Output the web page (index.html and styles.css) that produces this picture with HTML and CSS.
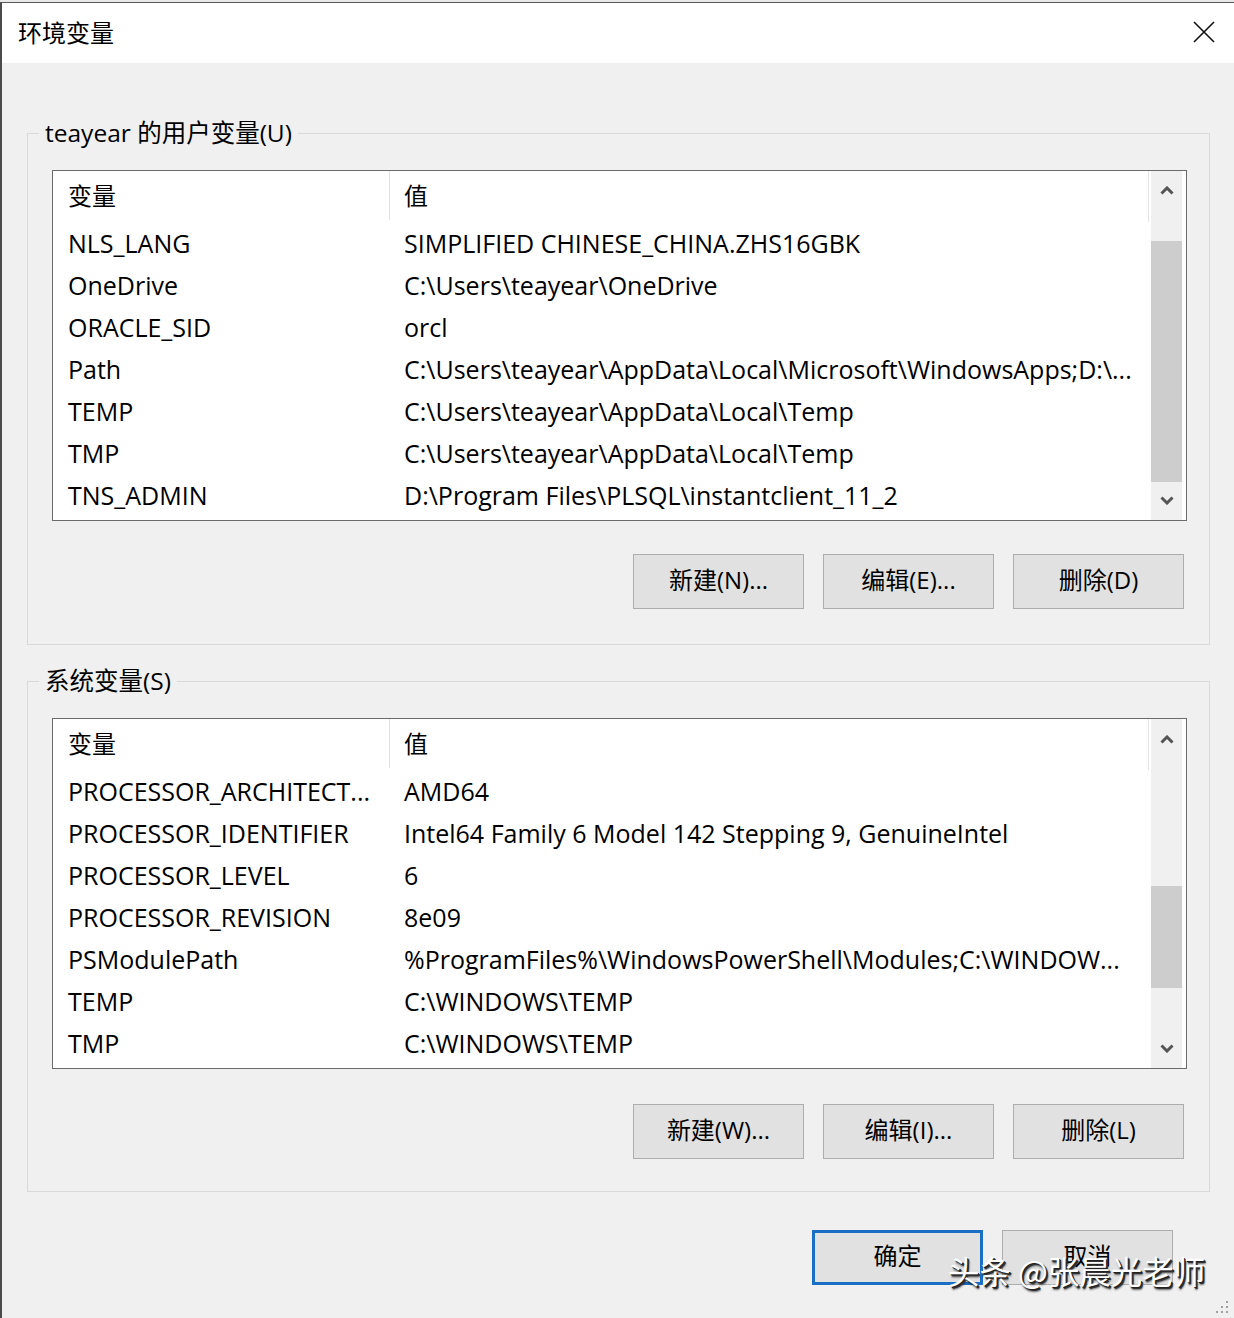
FILE: index.html
```html
<!DOCTYPE html>
<html lang="zh-CN">
<head>
<meta charset="utf-8">
<title>环境变量</title>
<link rel="stylesheet" href="styles.css">
</head>
<body>
<div class="window">
  <div class="titlebar">
    <span class="title">环境变量</span>
    <svg class="close" width="24" height="24" viewBox="0 0 24 24"><path d="M2 2 L22 22 M22 2 L2 22" stroke="#111" stroke-width="1.6" fill="none"/></svg>
  </div>
  <div class="content">
    <section class="group">
      <div class="group-title">teayear 的用户变量(U)</div>
      <div class="listview">
        <div class="list-main">
          <div class="list-head"><div class="col-var">变量</div><div class="col-val">值</div></div>
          <div class="list-row"><div class="col-var">NLS_LANG</div><div class="col-val">SIMPLIFIED CHINESE_CHINA.ZHS16GBK</div></div>
          <div class="list-row"><div class="col-var">OneDrive</div><div class="col-val">C:\Users\teayear\OneDrive</div></div>
          <div class="list-row"><div class="col-var">ORACLE_SID</div><div class="col-val">orcl</div></div>
          <div class="list-row"><div class="col-var">Path</div><div class="col-val">C:\Users\teayear\AppData\Local\Microsoft\WindowsApps;D:\...</div></div>
          <div class="list-row"><div class="col-var">TEMP</div><div class="col-val">C:\Users\teayear\AppData\Local\Temp</div></div>
          <div class="list-row"><div class="col-var">TMP</div><div class="col-val">C:\Users\teayear\AppData\Local\Temp</div></div>
          <div class="list-row"><div class="col-var">TNS_ADMIN</div><div class="col-val">D:\Program Files\PLSQL\instantclient_11_2</div></div>
        </div>
        <div class="scrollbar">
          <div class="sb-btn"><svg width="14" height="9" viewBox="0 0 14 9"><path d="M1.5 7.5 L7 2 L12.5 7.5" stroke="#555" stroke-width="3" fill="none"/></svg></div>
          <div class="sb-track"><div class="sb-thumb thumb-user"></div></div>
          <div class="sb-btn"><svg width="14" height="9" viewBox="0 0 14 9"><path d="M1.5 1.5 L7 7 L12.5 1.5" stroke="#555" stroke-width="3" fill="none"/></svg></div>
        </div>
      </div>
      <div class="btn-row">
        <button class="btn">新建(N)...</button>
        <button class="btn">编辑(E)...</button>
        <button class="btn">删除(D)</button>
      </div>
    </section>

    <section class="group group-sys">
      <div class="group-title">系统变量(S)</div>
      <div class="listview">
        <div class="list-main">
          <div class="list-head"><div class="col-var">变量</div><div class="col-val">值</div></div>
          <div class="list-row"><div class="col-var">PROCESSOR_ARCHITECT...</div><div class="col-val">AMD64</div></div>
          <div class="list-row"><div class="col-var">PROCESSOR_IDENTIFIER</div><div class="col-val">Intel64 Family 6 Model 142 Stepping 9, GenuineIntel</div></div>
          <div class="list-row"><div class="col-var">PROCESSOR_LEVEL</div><div class="col-val">6</div></div>
          <div class="list-row"><div class="col-var">PROCESSOR_REVISION</div><div class="col-val">8e09</div></div>
          <div class="list-row"><div class="col-var">PSModulePath</div><div class="col-val">%ProgramFiles%\WindowsPowerShell\Modules;C:\WINDOW...</div></div>
          <div class="list-row"><div class="col-var">TEMP</div><div class="col-val">C:\WINDOWS\TEMP</div></div>
          <div class="list-row"><div class="col-var">TMP</div><div class="col-val">C:\WINDOWS\TEMP</div></div>
        </div>
        <div class="scrollbar">
          <div class="sb-btn"><svg width="14" height="9" viewBox="0 0 14 9"><path d="M1.5 7.5 L7 2 L12.5 7.5" stroke="#555" stroke-width="3" fill="none"/></svg></div>
          <div class="sb-track"><div class="sb-thumb thumb-sys"></div></div>
          <div class="sb-btn"><svg width="14" height="9" viewBox="0 0 14 9"><path d="M1.5 1.5 L7 7 L12.5 1.5" stroke="#555" stroke-width="3" fill="none"/></svg></div>
        </div>
      </div>
      <div class="btn-row">
        <button class="btn">新建(W)...</button>
        <button class="btn">编辑(I)...</button>
        <button class="btn">删除(L)</button>
      </div>
    </section>

    <div class="dialog-buttons">
      <button class="btn btn-default">确定</button>
      <button class="btn">取消</button>
    </div>
  </div>
  <div class="watermark">头条 @张晨光老师</div>
  <svg class="grip" width="16" height="16" viewBox="0 0 16 16">
    <rect x="12" y="1" width="2" height="2" fill="#a0a0a0"/>
    <rect x="7" y="6" width="2" height="2" fill="#a0a0a0"/>
    <rect x="12" y="6" width="2" height="2" fill="#a0a0a0"/>
    <rect x="2" y="11" width="2" height="2" fill="#a0a0a0"/>
    <rect x="7" y="11" width="2" height="2" fill="#a0a0a0"/>
    <rect x="12" y="11" width="2" height="2" fill="#a0a0a0"/>
  </svg>
</div>
</body>
</html>
```

FILE: styles.css
```css
* { box-sizing: border-box; }

html, body {
  margin: 0;
  padding: 0;
  background: #e8e8e8;
}

body {
  width: 1234px;
  height: 1318px;
  overflow: hidden;
  font-family: "Open Sans", "Noto Sans CJK SC", sans-serif;
  font-size: 24px;
  color: #000;
}

.window {
  position: relative;
  margin-top: 2px;
  height: 1316px;
  border-top: 1px solid #5a5a5a;
  border-left: 2px solid #4a4a4a;
  background: #f0f0f0;
}

.titlebar {
  height: 60px;
  background: #fff;
  display: flex;
  align-items: center;
  justify-content: space-between;
  padding: 0 18px 0 16px;
}

.title {
  font-family: "Noto Sans CJK SC", sans-serif;
  font-size: 24px;
  line-height: 30px;
  margin-top: -2px;
}

.close {
  display: block;
  margin-top: -2px;
}

.content {
  padding: 70px 0 0 25px;
}

.group {
  position: relative;
  width: 1183px;
  border: 1px solid #d9d9d9;
  padding: 36px 22px 35px 24px;
}

.group-sys {
  margin-top: 36px;
  padding-bottom: 32px;
}

.group-title {
  position: absolute;
  top: -17px;
  left: 11px;
  padding: 0 6px;
  background: #f0f0f0;
  font-size: 24.5px;
  line-height: 32px;
  white-space: nowrap;
}

.listview {
  height: 351px;
  border: 1px solid #6b6b6b;
  background: #fff;
  display: flex;
}

.list-main {
  flex: 1;
  min-width: 0;
}

.list-head {
  display: flex;
  height: 51px;
  border-right: 1px solid #e3e3e3;
  font-size: 24px;
}

.list-head .col-var {
  border-right: 1px solid #e3e3e3;
  height: 49px;
  line-height: 49px;
}

.list-head .col-val {
  line-height: 49px;
  padding-left: 14px;
}

.list-row {
  display: flex;
  height: 42px;
  line-height: 42px;
  font-size: 25px;
}

.col-var {
  width: 337px;
  flex: none;
  padding-left: 15px;
  white-space: nowrap;
  overflow: hidden;
}

.col-val {
  flex: 1;
  min-width: 0;
  padding-left: 14px;
  white-space: nowrap;
  overflow: hidden;
}

.scrollbar {
  width: 31px;
  margin: 0 4px 0 2px;
  background: #f0f0f0;
  display: flex;
  flex-direction: column;
}

.sb-btn {
  height: 40px;
  display: flex;
  align-items: center;
  justify-content: center;
}

.sb-track {
  flex: 1;
}

.sb-thumb {
  background: #cdcdcd;
}

.thumb-user {
  margin-top: 31px;
  height: 241px;
}

.thumb-sys {
  margin-top: 127px;
  height: 102px;
}

.btn-row {
  display: flex;
  justify-content: flex-end;
  gap: 19px;
  margin-top: 33px;
  padding-right: 3px;
}

.group-sys .btn-row {
  margin-top: 35px;
}

.btn {
  width: 171px;
  height: 55px;
  background: #e1e1e1;
  border: 1px solid #adadad;
  font-family: "Open Sans", "Noto Sans CJK SC", sans-serif;
  font-size: 24px;
  line-height: 30px;
  color: #000;
  padding: 0 0 3px 0;
  margin: 0;
}

.btn-default {
  border: 3px solid #1a6fc4;
}

.dialog-buttons {
  display: flex;
  justify-content: flex-end;
  gap: 19px;
  margin-top: 38px;
  width: 1146px;
}

.watermark {
  position: absolute;
  left: 946px;
  top: 1247px;
  font-family: "Noto Sans CJK SC", sans-serif;
  font-size: 31.5px;
  line-height: 40px;
  color: #fff;
  white-space: nowrap;
  text-shadow: 1px 1px 0 #222, 2px 2px 0 #333, 2px 3px 2px rgba(0,0,0,0.6);
}

.grip {
  position: absolute;
  right: 4px;
  bottom: 2px;
}
```
